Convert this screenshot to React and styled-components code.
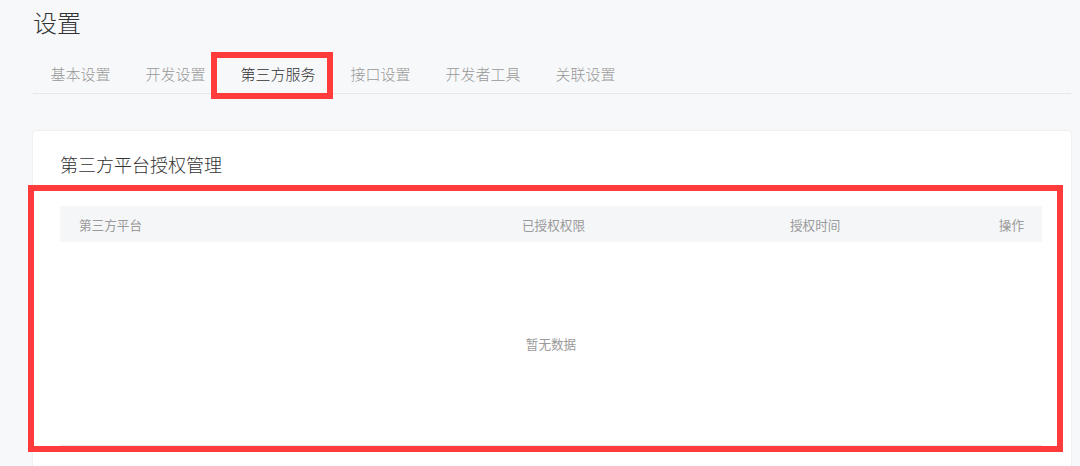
import React from 'react'
import styled, { createGlobalStyle } from 'styled-components'

const GlobalStyle = createGlobalStyle`
  html, body {
    margin: 0;
    padding: 0;
    background: #f7f8fa;
    font-family: "Noto Sans CJK SC", "Noto Sans", sans-serif;
    overflow: hidden;
  }
`

const Page = styled.div`
  padding: 6px 9px 0 33px;
  height: 466px;
  box-sizing: border-box;
`

const Title = styled.h1`
  margin: 0;
  font-size: 24px;
  line-height: 32px;
  font-weight: 300;
  color: #333;
`

const Tabs = styled.nav`
  display: flex;
  margin-top: 17px;
  border-bottom: 1px solid #e6e8eb;
`

const Tab = styled.div`
  position: relative;
  padding: 0 17.5px;
  height: 38px;
  line-height: 38px;
  font-size: 15px;
  font-weight: 300;
  color: ${(p) => (p.$active ? '#333' : '#999')};
  cursor: pointer;

  ${(p) =>
    p.$marked &&
    `
    &::after {
      content: '';
      position: absolute;
      left: -12.5px;
      right: 0.5px;
      top: -3px;
      bottom: -6px;
      border: 6px solid #ff3b3b;
      box-sizing: border-box;
    }
  `}
`

const Card = styled.section`
  margin-top: 37px;
  background: #fff;
  border-radius: 4px;
  box-shadow: 0 0 0 1px #eef0f2;
  padding: 20px 29px 40px 27px;
`

const CardTitle = styled.h2`
  margin: 0;
  font-size: 18px;
  line-height: 26px;
  font-weight: 300;
  color: #333;
`

const Table = styled.div`
  position: relative;
  margin-top: 29px;
  border-bottom: 2px solid #e9e9ec;

  &::after {
    content: '';
    position: absolute;
    left: -32px;
    right: -21px;
    top: -21px;
    bottom: -7px;
    border: 6px solid #ff3b3b;
    box-sizing: border-box;
    pointer-events: none;
  }
`

const HeadRow = styled.div`
  display: grid;
  grid-template-columns: 443px 268px 1fr 1fr;
  height: 36px;
  align-items: center;
  background: #f5f6f8;
`

const HeadCell = styled.div`
  padding: 0 18px 0 19px;
  font-size: 12.6px;
  color: #9a9a9a;
  text-align: ${(p) => p.$align || 'left'};
`

const Empty = styled.div`
  height: 203px;
  display: flex;
  align-items: center;
  justify-content: center;
  font-size: 12.6px;
  color: #9a9a9a;
`

const tabs = ['基本设置', '开发设置', '第三方服务', '接口设置', '开发者工具', '关联设置']

export default function App() {
  return (
    <Page>
      <GlobalStyle />
      <Title>设置</Title>
      <Tabs>
        {tabs.map((t, i) => (
          <Tab key={t} $active={i === 2} $marked={i === 2}>
            {t}
          </Tab>
        ))}
      </Tabs>
      <Card>
        <CardTitle>第三方平台授权管理</CardTitle>
        <Table>
          <HeadRow>
            <HeadCell>第三方平台</HeadCell>
            <HeadCell>已授权权限</HeadCell>
            <HeadCell>授权时间</HeadCell>
            <HeadCell $align="right">操作</HeadCell>
          </HeadRow>
          <Empty>暂无数据</Empty>
        </Table>
      </Card>
    </Page>
  )
}
